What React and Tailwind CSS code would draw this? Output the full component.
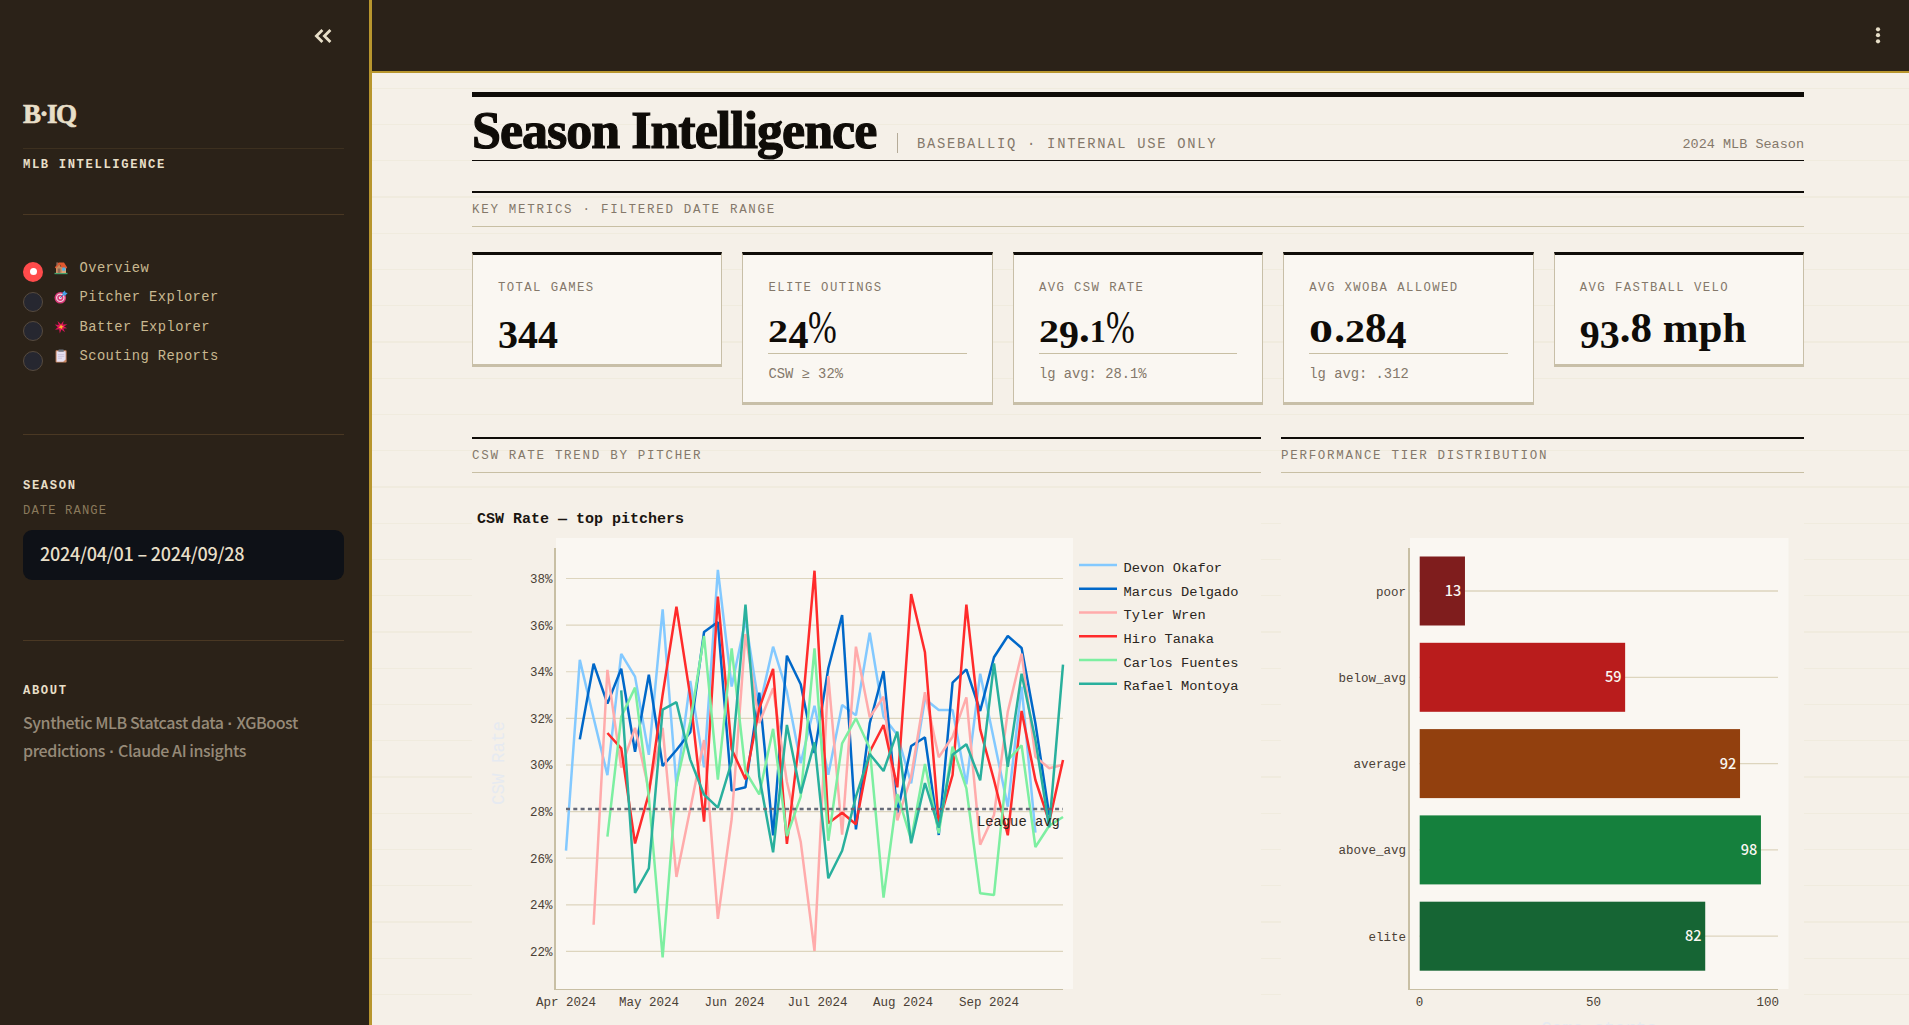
const mono = "font-['Liberation_Mono','Courier_New',monospace]";
const serif = "font-['Liberation_Serif',serif]";
const sans = "font-['Noto_Sans_CJK_SC','Noto_Sans',sans-serif] font-medium";

const navItems = [
  { label: "Overview", icon: HouseIcon, active: true },
  { label: "Pitcher Explorer", icon: TargetIcon },
  { label: "Batter Explorer", icon: BurstIcon },
  { label: "Scouting Reports", icon: ClipboardIcon },
];

const metrics = [
  { label: "TOTAL GAMES", value: "344" },
  { label: "ELITE OUTINGS", value: "24%", note: "CSW ≥ 32%" },
  { label: "AVG CSW RATE", value: "29.1%", note: "lg avg: 28.1%" },
  { label: "AVG XWOBA ALLOWED", value: "0.284", note: "lg avg: .312" },
  { label: "AVG FASTBALL VELO", value: "93.8 mph" },
];

// y positions inside the chart, one every five days from `start`
const series = [
  {
    name: "Devon Okafor",
    color: "#83c9ff",
    start: 0,
    points: [850.6, 659.9, 718, 775.2, 653.8, 676.6, 754.8, 609.4, 786, 681, 767.4, 569.8, 686.5, 620, 708, 646.7, 691.7, 763.3, 705.7, 774.7, 705, 715.3, 632.7, 716.7, 735, 783.3, 699, 710, 710, 784.3, 673.7, 740, 806.7, 686.7, 832.7],
  },
  {
    name: "Marcus Delgado",
    color: "#0068c9",
    start: 1,
    points: [739.4, 663.7, 703.6, 668.8, 751.7, 674.6, 766, 750, 732.3, 632, 622, 790.6, 787.2, 692.7, 835.3, 655.7, 684.3, 753, 668.3, 615, 829.3, 723.3, 671, 813.3, 746, 737.3, 835, 682.7, 669.3, 711, 657.3, 636, 648, 723.3, 815],
  },
  {
    name: "Tyler Wren",
    color: "#ffabab",
    start: 2,
    points: [924.7, 669.8, 767.7, 727.8, 790, 727.8, 876.9, 809, 740, 918.9, 819, 634, 723, 688.3, 782, 841.7, 951, 676, 834.7, 646.7, 717.3, 696.7, 820.3, 776.7, 692.3, 757.3, 736.7, 697.3, 844.7, 815, 711.7, 653.7, 756.7, 768.3, 764.7],
  },
  {
    name: "Hiro Tanaka",
    color: "#ff2b2b",
    start: 3,
    points: [733, 748.3, 843.5, 793.7, 694.7, 606.7, 696.4, 821.6, 596.5, 749.3, 779.3, 708.4, 668.8, 843.8, 728.3, 570.7, 823.3, 812.7, 824.3, 751.7, 725, 787.3, 594, 652.3, 823.3, 775, 604.7, 729.3, 780, 835.3, 711, 780, 821.7, 760],
  },
  {
    name: "Carlos Fuentes",
    color: "#7defa1",
    start: 3,
    points: [836.7, 716.9, 687.6, 797, 957.5, 783.5, 722, 636, 779.7, 648.3, 771.5, 794.4, 728.8, 836, 796.7, 648.3, 840.7, 743.3, 718.3, 748.3, 897.7, 794, 840, 764, 833.3, 746.7, 788.3, 893.3, 895, 760, 745.3, 847, 825.7, 817],
  },
  {
    name: "Rafael Montoya",
    color: "#29b09d",
    start: 4,
    points: [690.3, 893, 868.4, 709.7, 702.2, 759.6, 794.7, 807.7, 762, 604.6, 776.6, 852.4, 725, 793.3, 742.3, 878.3, 850.7, 796.7, 754, 771, 731.7, 843.3, 783, 827.7, 754.7, 744.3, 780.3, 663.3, 766.7, 673.7, 740, 827.3, 664.7],
  },
];

const months = [
  ["Apr 2024", 566],
  ["May 2024", 649],
  ["Jun 2024", 734.5],
  ["Jul 2024", 817.5],
  ["Aug 2024", 903],
  ["Sep 2024", 989],
];

const yTicks = [38, 36, 34, 32, 30, 28, 26, 24, 22];

const tiers = [
  { name: "poor", value: 13, color: "#7f1d1d" },
  { name: "below_avg", value: 59, color: "#b91c1c" },
  { name: "average", value: 92, color: "#92400e" },
  { name: "above_avg", value: 98, color: "#15803d" },
  { name: "elite", value: 82, color: "#166534" },
];

function HouseIcon() {
  return (
    <svg viewBox="0 0 14 14" className="size-3.5">
      <rect x="0.5" y="11.8" width="13" height="1.4" fill="#43a06b" />
      <rect x="2" y="6" width="10" height="6" fill="#d9a577" />
      <path d="M4.6 1.4H10L13.2 6.6 12.4 7.4H8L6 3.4 2 7.6 0.8 6.6Z" fill="#e0582f" />
      <path d="M2.2 7 5.4 3.4 7.8 7.4V11.8H2.2Z" fill="#c98a5c" />
      <rect x="3.8" y="7.5" width="2.6" height="4.3" fill="#8a6a58" />
      <rect x="8.2" y="6.5" width="3.2" height="3.2" fill="#49b3e8" />
      <rect x="2.4" y="1.4" width="1.5" height="3" fill="#9a6a58" />
    </svg>
  );
}

function TargetIcon() {
  return (
    <svg viewBox="0 0 14 14" className="size-3.5">
      <circle cx="6.3" cy="7.8" r="5.8" fill="#d93b78" />
      <circle cx="6.3" cy="7.8" r="4.3" fill="#f1d5e2" />
      <circle cx="6.3" cy="7.8" r="3.1" fill="#d93b78" />
      <circle cx="6.3" cy="7.8" r="1.5" fill="#f1d5e2" />
      <path d="M6.3 7.8 10 4" stroke="#326fb0" strokeWidth="1" />
      <path d="M8.6 5.4V2.6L11 0.4 11.4 2.6 13.6 3 11.4 5.4Z" fill="#42a0e8" />
    </svg>
  );
}

function BurstIcon() {
  return (
    <svg viewBox="0 0 14 14" className="size-3.5">
      <path d="M7 4.2 9.6 0.8 9 4.6 13.4 4.2 10 6.6 13.2 8.2 9.4 8.4 11 12.2 7.4 9.6 5.8 13.6 5.2 9.3 1 9.8 3.8 7.2 0.8 4.6 4.8 5 3.5 1Z" fill="#dc1458" />
      <path d="M7 4.6 8 6 9.8 6.6 8.2 7.6 7.6 9.2 6.4 8 4.4 7.4 6 6.3Z" fill="#ffb02e" />
    </svg>
  );
}

function ClipboardIcon() {
  return (
    <svg viewBox="0 0 14 14" className="size-3.5">
      <rect x="1.6" y="1.2" width="11" height="12.4" rx="0.8" fill="#c98763" />
      <path d="M2.6 2.2h9v8.3l-2.4 2.3H2.6Z" fill="#e6dff0" />
      <path d="M4 5.6h6.2M4 7.4h6.2M4 9.2h4" stroke="#c4bad4" strokeWidth="0.7" />
      <rect x="4.4" y="0.4" width="5.4" height="2.4" rx="0.6" fill="#6f7480" />
    </svg>
  );
}

function Dot() {
  return <span className="font-['Liberation_Sans',sans-serif] leading-none font-bold"> · </span>;
}

function Sidebar() {
  return (
    <aside className="flex w-[372px] shrink-0 flex-col border-r-3 border-[#b8962e] bg-[#2b2218] pr-[25px] pl-[23px]">
      <div className="flex h-[72px] items-center justify-end pr-[12px]">
        <svg viewBox="0 0 18 14" className="h-3.5 w-[18px]" fill="none" stroke="#e8dfc8" strokeWidth="2.8">
          <path d="M8.4 1 2.4 7l6 6M16.4 1l-6 6 6 6" />
        </svg>
      </div>

      <div className={`${serif} mt-[24px] h-[53px] border-b border-[#3d301f] text-[27px] leading-9 font-bold tracking-[-1.5px] text-[#e8dfc8] [-webkit-text-stroke:0.7px_#e8dfc8]`}>
        B·IQ
      </div>
      <div className={`${mono} mt-2 h-[57px] text-[12.2px] leading-4 font-bold tracking-[1.62px] text-[#e8dfc8]`}>
        MLB INTELLIGENCE
      </div>
      <div className="h-px bg-[#4a3823]" />

      <nav className="mt-[42px] h-[177px] pt-px">
        {navItems.map(({ label, icon: Icon, active }) => (
          <div key={label} className="flex h-[29.5px] items-start">
            <span
              className={
                active
                  ? "mt-[3.5px] flex size-5 items-center justify-center rounded-full bg-[#ff4b4b]"
                  : "mt-[4px] size-5 rounded-full border border-[#564a3e] bg-[#262730]"
              }
            >
              {active && <span className="size-[7px] rounded-full bg-white" />}
            </span>
            <span className="mt-[2.5px] ml-[11px]">
              <Icon />
            </span>
            <span className={`${mono} mt-[0.5px] ml-[11.5px] text-[13.8px] leading-5 tracking-[0.42px] text-[#c8b890]`}>
              {label}
            </span>
          </div>
        ))}
      </nav>

      <div className="h-px bg-[#4a3823]" />
      <div className={`${mono} mt-[43px] text-[12.2px] leading-4 font-bold tracking-[1.62px] text-[#e8dfc8]`}>
        SEASON
      </div>
      <div className={`${mono} mt-[9px] text-[12.2px] leading-4 tracking-[1.1px] text-[#8a7a5c]`}>
        DATE RANGE
      </div>
      <div className={`${sans} mt-[11px] flex h-[50px] items-center rounded-[9px] bg-[#0e1117] px-[17px] pb-[3px] text-[18px] tracking-[-0.25px] text-[#e8dfc8]`}>
        2024/04/01 – 2024/09/28
      </div>

      <div className="mt-[60px] h-px bg-[#4a3823]" />
      <div className={`${mono} mt-[42px] text-[12.2px] leading-4 font-bold tracking-[1.62px] text-[#e8dfc8]`}>
        ABOUT
      </div>
      <p className={`${sans} mt-[9px] text-[16px] leading-7 tracking-[-0.42px] whitespace-nowrap text-[#968a78]`}>
        Synthetic MLB Statcast data<Dot />XGBoost
        <br />
        predictions<Dot />Claude AI insights
      </p>
    </aside>
  );
}

function SectionHead({ children }) {
  return (
    <div className={`${mono} flex h-[36px] items-center border-t-2 border-b border-t-[#0f0c08] border-b-[#c8bfa4] pt-[2px] text-[12.5px] tracking-[1.71px] text-[#84786a]`}>
      {children}
    </div>
  );
}

// Old-style numerals: low figures sit at x-height, 3/4/9 hang under the baseline
function figureClass(ch) {
  if (ch === "0") return "inline-block w-[25px] origin-left scale-x-[1.5] text-[32px]";
  if (ch === "1") return "inline-block w-[16px] origin-left text-[32px]";
  if (ch === "2") return "inline-block w-[20px] origin-left scale-x-125 text-[32px]";
  if ("34579".includes(ch)) return "align-[-6px] text-[40px]";
  if (ch === "%") return "inline-block w-[28px] origin-left scale-x-75 align-[-1px] text-[46px] font-normal";
  return "text-[43px]";
}

function Metric({ label, value, note }) {
  return (
    <div className="border-x border-t-3 border-b-3 border-x-[#c8bfa8] border-t-[#0f0c08] border-b-[#c8bfa8] bg-[#faf7f2] px-[25px]">
      <div className={`${mono} mt-[25px] text-[12.3px] leading-4 tracking-[1.4px] text-[#84786a]`}>{label}</div>
      <div className={`${serif} mt-[8px] h-[49px] text-[43px] leading-[47px] font-bold whitespace-pre text-[#0f0c08]`}>
        {value.split(/(?<=[\d.%])/).map((part, i) => (
          <span key={i} className={`${figureClass(part)} leading-[0]`}>{part}</span>
        ))}
      </div>
      {note ? (
        <div className={`${mono} h-[49px] border-t border-[#c8bfa4] pt-[11px] text-[13.8px] leading-5 text-[#84786a]`}>
          {note}
        </div>
      ) : (
        <div className="h-[11px]" />
      )}
    </div>
  );
}

const gridY = (v) => 578.5 + (38 - v) * 23.31;

function TrendChart() {
  return (
    <svg viewBox="472 490 789 560" className={`${mono} block h-[560px] w-[789px] bg-[#f5f0e8]`}>
      <text x="477" y="523" fontSize="15" fontWeight="700" fill="#1a1510">CSW Rate — top pitchers</text>
      <rect x="556" y="538" width="517" height="451" fill="#faf7f2" />
      {yTicks.map((t) => (
        <g key={t}>
          <line x1="566" x2="1063" y1={gridY(t)} y2={gridY(t)} stroke="#ddd5be" strokeWidth="1.2" />
          <text x="552.5" y={gridY(t) + 4.5} textAnchor="end" fontSize="12.5" fill="#4a4035">{t}%</text>
        </g>
      ))}
      <rect x="554" y="548" width="2" height="442" fill="#c8bfa4" />
      <rect x="554" y="989" width="509" height="1" fill="#c8bfa4" />
      {series.map((s) => (
        <polyline
          key={s.name}
          points={s.points.map((y, i) => `${566 + (s.start + i) * 13.806},${y}`).join(" ")}
          fill="none"
          stroke={s.color}
          strokeWidth="2.5"
          strokeLinejoin="bevel"
        />
      ))}
      <line x1="566" x2="1063" y1="809" y2="809" stroke="#666a78" strokeWidth="2.3" strokeDasharray="4 3.3" />
      <text x="977" y="826" fontSize="13.8" fill="#2a2520">League avg</text>
      {months.map(([m, x]) => (
        <text key={m} x={x} y="1006" textAnchor="middle" fontSize="12.5" fill="#4a4035">{m}</text>
      ))}
      <text transform="translate(504 763) rotate(-90)" textAnchor="middle" fontSize="17.5" fill="#e6eaf1">CSW Rate</text>
      {series.map((s, i) => (
        <g key={s.name}>
          <line x1="1079" x2="1117" y1={565 + i * 23.75} y2={565 + i * 23.75} stroke={s.color} strokeWidth="2.5" />
          <text x="1123.5" y={571.9 + i * 23.7} fontSize="13.7" fill="#2a2520">{s.name}</text>
        </g>
      ))}
    </svg>
  );
}

function TierChart() {
  return (
    <svg viewBox="1281 490 523 560" className={`${mono} block h-[560px] w-[523px] bg-[#f5f0e8]`}>
      <rect x="1410" y="538" width="378.5" height="451" fill="#faf7f2" />
      {tiers.map((t, i) => {
        const cy = 591 + i * 86.3;
        const w = t.value * 3.482;
        return (
          <g key={t.name}>
            <line x1="1419.5" x2="1778" y1={cy} y2={cy} stroke="#ddd5be" strokeWidth="1.3" />
            <rect x="1419.7" y={cy - 34.5} width={w} height="69" fill={t.color} />
            <text x={1419.5 + w - 3.5} y={cy + 5} textAnchor="end" fontSize="14.5" fill="#faf7f2" className={sans}>{t.value}</text>
            <text x="1406" y={cy + 4.5} textAnchor="end" fontSize="12.5" fill="#4a4035">{t.name}</text>
          </g>
        );
      })}
      <rect x="1408" y="548" width="2" height="442" fill="#c8bfa4" />
      <rect x="1408" y="989" width="370" height="1" fill="#c8bfa4" />
      {[0, 50, 100].map((v) => (
        <text key={v} x={1419.5 + v * 3.482} y="1006" textAnchor="middle" fontSize="12.5" fill="#4a4035">{v}</text>
      ))}
      <text x="1599" y="1034" textAnchor="middle" fontSize="17.5" fill="#e6eaf1">Game starts</text>
    </svg>
  );
}

export default function App() {
  return (
    <div className="flex h-[1025px] w-[1909px] overflow-hidden bg-[#f5f0e8]">
      <Sidebar />
      <div className="flex min-w-0 flex-1 flex-col">
        <header className="flex h-[73px] shrink-0 items-center justify-end border-b-2 border-[#b8962e] bg-[#2b2218] pr-[28.5px]">
          <svg viewBox="0 0 6 18" className="h-[18px] w-1.5" fill="#e8dfc8">
            <circle cx="3" cy="2.3" r="2.1" />
            <circle cx="3" cy="8.2" r="2.1" />
            <circle cx="3" cy="14.3" r="2.1" />
          </svg>
        </header>

        <main className="h-[952px] overflow-hidden bg-[repeating-linear-gradient(to_bottom,transparent_0,transparent_14.68px,#f0ebde_14.68px,#f0ebde_15.81px,transparent_15.81px,transparent_36.25px)] pt-[19px] pr-[105px] pl-[100px]">
          <div className="flex h-[69px] items-end border-t-5 border-b border-[#0f0c08] pb-[6px]">
            <h1 className={`${serif} mb-[-7px] w-[405px] text-[52px] leading-[60px] font-bold tracking-[-1px] whitespace-nowrap text-[#0f0c08] [-webkit-text-stroke:1.2px_#0f0c08]`}>
              Season Intelligence
            </h1>
            <div className={`${mono} mb-px ml-[20px] flex h-5 items-end border-l border-[#b5ab98] pl-[19px] text-[13.8px] leading-[16px] tracking-[1.73px] text-[#84786a]`}>
              BASEBALLIQ · INTERNAL USE ONLY
            </div>
            <div className={`${mono} ml-auto text-[13.5px] leading-[18px] text-[#84786a]`}>2024 MLB Season</div>
          </div>

          <div className="mt-[30px]">
            <SectionHead>KEY METRICS · FILTERED DATE RANGE</SectionHead>
          </div>

          <div className="mt-[25px] grid h-[185px] grid-cols-5 items-start gap-[20.25px]">
            {metrics.map((m) => (
              <Metric key={m.label} {...m} />
            ))}
          </div>

          <div className="grid grid-cols-[789px_523px] gap-5">
            <section>
              <SectionHead>CSW RATE TREND BY PITCHER</SectionHead>
              <div className="mt-[17px]">
                <TrendChart />
              </div>
            </section>
            <section>
              <SectionHead>PERFORMANCE TIER DISTRIBUTION</SectionHead>
              <div className="mt-[17px]">
                <TierChart />
              </div>
            </section>
          </div>
        </main>
      </div>
    </div>
  );
}
